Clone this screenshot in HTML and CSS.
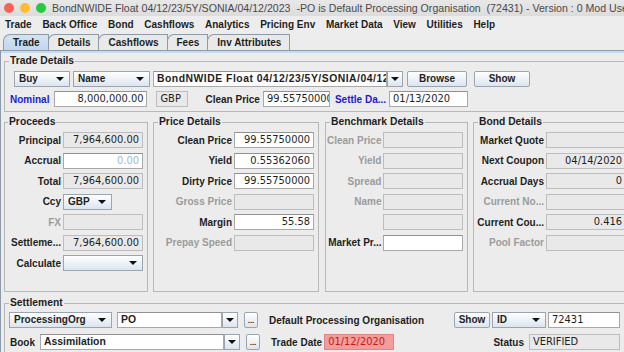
FILE: index.html
```html
<!DOCTYPE html>
<html lang="en">
<head>
  <meta charset="UTF-8" />
  <title>Trade - BondNWIDE Float</title>
  <link rel="stylesheet" href="styles.css">
</head>
<body>
  <div class="titlebar">
    <span class="lights"><i class="red"></i><i class="amber"></i><i class="green"></i></span>
    <span class="title">BondNWIDE Float 04/12/23/5Y/SONIA/04/12/2023 &nbsp;-PO is Default Processing Organisation &nbsp;(72431) - Version : 0 Mod User</span>
  </div>

  <div class="menubar">
    <span>Trade</span><span>Back Office</span><span>Bond</span><span>Cashflows</span><span>Analytics</span>
    <span>Pricing Env</span><span>Market Data</span><span>View</span><span>Utilities</span><span>Help</span>
  </div>

  <div class="tabs">
    <span class="tab on">Trade</span>
    <span class="tab">Details</span>
    <span class="tab">Cashflows</span>
    <span class="tab">Fees</span>
    <span class="tab">Inv Attributes</span>
  </div>

  <div class="panel">
    <fieldset class="grp trade-details">
      <legend>Trade Details</legend>
      <div class="row first">
        <span class="combo buy">Buy</span>
        <span class="combo name">Name</span>
        <span class="fld strong product">BondNWIDE Float 04/12/23/5Y/SONIA/04/12/2023</span><span class="arrow"></span>
        <span class="btn browse">Browse</span>
        <span class="btn show">Show</span>
      </div>
      <div class="row">
        <label class="link">Nominal</label>
        <span class="fld num nominal">8,000,000.00</span>
        <span class="fld off ccy">GBP</span>
        <label class="cp">Clean Price</label>
        <span class="fld price">99.55750000</span>
        <label class="link settle">Settle Da...</label>
        <span class="fld date">01/13/2020</span>
      </div>
    </fieldset>

    <div class="groups">
      <fieldset class="grp proceeds">
        <legend>Proceeds</legend>
        <div class="form">
          <label>Principal</label><span class="fld off num">7,964,600.00</span>
          <label>Accrual</label><span class="fld num faint">0.00</span>
          <label>Total</label><span class="fld off num">7,964,600.00</span>
          <label>Ccy</label><span class="combo ccy-pick">GBP</span>
          <label class="dim">FX</label><span class="fld off"></span>
          <label>Settleme...</label><span class="fld off num">7,964,600.00</span>
          <label>Calculate</label><span class="combo"></span>
        </div>
      </fieldset>

      <fieldset class="grp price-details">
        <legend>Price Details</legend>
        <div class="form">
          <label>Clean Price</label><span class="fld num">99.55750000</span>
          <label>Yield</label><span class="fld num">0.55362060</span>
          <label>Dirty Price</label><span class="fld num">99.55750000</span>
          <label class="dim">Gross Price</label><span class="fld off"></span>
          <label>Margin</label><span class="fld num">55.58</span>
          <label class="dim">Prepay Speed</label><span class="fld off"></span>
        </div>
      </fieldset>

      <fieldset class="grp benchmark">
        <legend>Benchmark Details</legend>
        <div class="form">
          <label class="dim">Clean Price</label><span class="fld off"></span>
          <label class="dim">Yield</label><span class="fld off"></span>
          <label class="dim">Spread</label><span class="fld off"></span>
          <label class="dim">Name</label><span class="fld off"></span>
          <label></label><span class="fld off"></span>
          <label>Market Pr...</label><span class="fld"></span>
        </div>
      </fieldset>

      <fieldset class="grp bond">
        <legend>Bond Details</legend>
        <div class="form">
          <label>Market Quote</label><span class="fld off"></span>
          <label>Next Coupon</label><span class="fld off num">04/14/2020</span>
          <label>Accrual Days</label><span class="fld off num">0</span>
          <label class="dim">Current No...</label><span class="fld off"></span>
          <label>Current Cou...</label><span class="fld off num">0.416</span>
          <label class="dim">Pool Factor</label><span class="fld off"></span>
        </div>
      </fieldset>
    </div>

    <fieldset class="grp settlement">
      <legend>Settlement</legend>
      <div class="row">
        <span class="combo porg">ProcessingOrg</span>
        <span class="fld strong po">PO</span><span class="arrow"></span>
        <span class="btn dots">...</span>
        <label class="note">Default Processing Organisation</label>
        <span class="btn show-id">Show</span>
        <span class="combo id">ID</span>
        <span class="fld trade-id">72431</span>
      </div>
      <div class="row">
        <label class="book">Book</label>
        <span class="fld strong book-fld">Assimilation</span><span class="arrow"></span>
        <span class="btn dots">...</span>
        <label class="note">Trade Date</label>
        <span class="fld trade-date">01/12/2020</span>
        <label class="status">Status</label>
        <span class="fld off status-fld">VERIFIED</span>
      </div>
    </fieldset>
  </div>
</body>
</html>
```

FILE: styles.css
```css
* {
  box-sizing: border-box;
}
html, body {
  margin: 0;
  padding: 0;
  background: #ececec;
  overflow: hidden;
}
body {
  width: 624px;
  height: 352px;
  font-family: "Liberation Sans", Arial, sans-serif;
  font-size: 10px;
  color: #1e1e1e;
}

/* window chrome */
.titlebar {
  height: 16px;
  display: flex;
  align-items: center;
  white-space: nowrap;
  overflow: hidden;
  background: linear-gradient(#e8e8e8, #dcdcdc);
}
.lights {
  display: flex;
  gap: 6px;
  padding-left: 4px;
  margin-right: 6px;
  flex: none;
}
.lights i {
  width: 10px;
  height: 10px;
  border-radius: 50%;
}
.lights .red { background: #fe5f57; }
.lights .amber { background: #febc2e; }
.lights .green { background: #28c840; }
.title {
  color: #4a4a4a;
  font-size: 10.6px;
}

.menubar {
  height: 17px;
  display: flex;
  align-items: center;
  gap: 10.7px;
  padding-left: 5px;
  font-weight: bold;
  background: #ededed;
}

/* tabs */
.tabs {
  display: flex;
  align-items: flex-end;
  height: 17px;
  padding-left: 3px;
}
.tab {
  height: 16px;
  line-height: 15px;
  padding: 0 8px 0 9px;
  margin-right: -1px;
  border: 1px solid #8d9aa7;
  border-bottom: none;
  border-top-left-radius: 7px;
  background: #e9e9e9;
  font-weight: bold;
}
.tab.on {
  background: linear-gradient(#d3e3f3, #c2d7ec);
}
.panel {
  border-top: 1px solid #8d9aa7;
  border-left: 1px solid #8d9aa7;
  box-shadow: inset 0 2px 0 #c6dbf0;
  padding: 4px 0 0 3px;
}

/* titled groups */
.grp {
  margin: 0;
  min-width: 0;
  border: 1px solid #b8b8b8;
  padding: 0 4px 4px;
}
.grp legend {
  font-weight: bold;
  font-size: 10.3px;
  line-height: 12px;
  padding: 0 1px;
}

.row {
  display: flex;
  align-items: center;
  height: 16px;
  margin-top: 4px;
}
label {
  font-weight: bold;
  white-space: nowrap;
}
label.link {
  color: #1b1bd6;
}
label.dim {
  color: #9b9b9b;
}

/* inputs */
.fld {
  display: block;
  height: 16px;
  line-height: 14px;
  padding: 0 3px;
  border: 1px solid #a9a9a9;
  border-top-color: #929292;
  background: #fff;
  font-family: "DejaVu Sans", sans-serif;
  font-size: 9.9px;
  white-space: nowrap;
  overflow: hidden;
}
.fld.strong {
  font-family: "Liberation Sans", Arial, sans-serif;
  font-size: 10.4px;
  font-weight: bold;
}
.fld.off {
  background: #e9e9e9;
  border-color: #bdbdbd;
}
.fld.num {
  text-align: right;
}
.fld.faint {
  color: #9cbad8;
}
.combo, .btn, .arrow {
  display: block;
  height: 16px;
  line-height: 14px;
  border: 1px solid #9ba5af;
  background: linear-gradient(#ffffff, #dbe5ef);
  white-space: nowrap;
}
.combo {
  position: relative;
  padding: 0 18px 0 4px;
  font-weight: bold;
}
.combo::after, .arrow::after {
  content: "";
  position: absolute;
  right: 5px;
  top: 5px;
  border-left: 4px solid transparent;
  border-right: 4px solid transparent;
  border-top: 4px solid #111;
}
.arrow {
  position: relative;
  width: 16px;
  flex: none;
}
.arrow::after {
  right: 3px;
}
.btn {
  text-align: center;
  font-weight: bold;
  border-radius: 2px;
}

/* trade details */
.trade-details {
  height: 57px;
  width: 630px;
}
.trade-details .row {
  padding-left: 1px;
}
.trade-details .first {
  padding-left: 5px;
}
.combo.buy { width: 56px; }
.combo.name { width: 77px; margin-left: 3px; }
.fld.product { width: 234px; margin-left: 3px; letter-spacing: 0.5px; }
.btn.browse { width: 60px; margin-left: 4px; }
.btn.show { width: 56px; margin-left: 7px; }
.fld.nominal { width: 93px; margin-left: 5px; }
.fld.ccy { width: 32px; margin-left: 9px; }
label.cp { margin-left: 17px; }
.fld.price { width: 67px; margin-left: 3px; }
label.settle { margin-left: 5px; }
.fld.date { width: 79px; margin-left: 3px; }

/* four detail groups */
.groups {
  display: flex;
  height: 176px;
  margin-top: 4px;
  width: 640px;
}
.proceeds { width: 144px; padding-left: 3px; }
.price-details { width: 166px; margin-left: 5px; }
.benchmark { width: 143px; margin-left: 6px; padding-left: 1px; }
.bond { width: 158px; margin-left: 5px; padding-left: 0; }
.benchmark legend { margin-left: 3px; }
.bond legend { margin-left: 4px; }
.form {
  display: grid;
  grid-template-columns: 1fr 80px;
  grid-auto-rows: 16px;
  row-gap: 4.5px;
  column-gap: 2px;
  align-items: center;
  margin-top: 4px;
}
.form label {
  text-align: right;
}
.combo.ccy-pick {
  width: 49px;
}

/* settlement */
.settlement {
  margin-top: 5px;
  height: 70px;
  width: 622px;
  padding: 0 5px 0 4px;
}
.settlement .row {
  margin-top: 3px;
}
.settlement .row + .row {
  margin-top: 6px;
}
.combo.porg { width: 103px; }
.fld.po { width: 105px; margin-left: 5px; }
.btn.dots {
  width: 14px;
  margin-left: 6px;
  line-height: 16px;
  font-size: 8px;
  border-radius: 2px;
}
label.note { margin-left: 11px; }
.btn.show-id { width: 36px; margin-left: auto; }
.combo.id { width: 54px; margin-left: 2px; }
.fld.trade-id { width: 72px; margin-left: 2px; }
label.book { margin-left: 1px; }
.fld.book-fld { width: 184px; margin-left: 5px; }
.fld.trade-date {
  width: 70px;
  margin-left: 2px;
  background: #f39c9c;
  border-color: #e08585;
  color: #c41a1a;
}
label.status { margin-left: auto; }
.fld.status-fld { width: 91px; margin-left: 5px; }
```
